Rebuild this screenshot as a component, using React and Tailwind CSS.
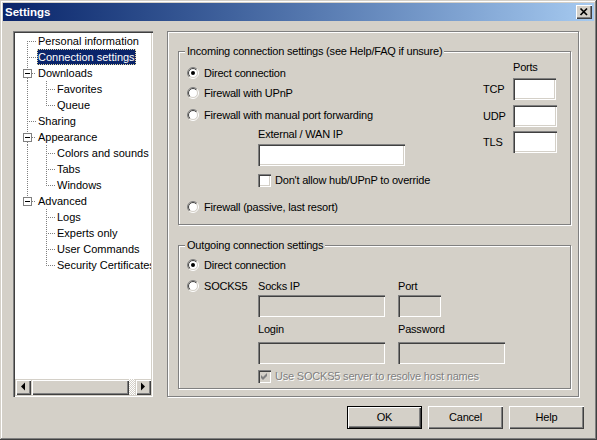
import React, { useId } from "react";

const raised =
  "shadow-[inset_1px_1px_#d4d0c8,inset_2px_2px_#fff,inset_-1px_-1px_#404040,inset_-2px_-2px_#808080]";
const button =
  "shadow-[inset_1px_1px_#fff,inset_-1px_-1px_#404040,inset_-2px_-2px_#808080]";
const sunken =
  "shadow-[inset_1px_1px_#808080,inset_2px_2px_#404040,inset_-1px_-1px_#fff,inset_-2px_-2px_#d4d0c8]";
const etched = "border border-[#808080] shadow-[inset_1px_1px_#fff,1px_1px_#fff]";

const tree = [
  { t: "Personal information", l: 0, first: true },
  { t: "Connection settings", l: 0, sel: true },
  { t: "Downloads", l: 0, box: true },
  { t: "Favorites", l: 1 },
  { t: "Queue", l: 1, last: true },
  { t: "Sharing", l: 0 },
  { t: "Appearance", l: 0, box: true },
  { t: "Colors and sounds", l: 1 },
  { t: "Tabs", l: 1 },
  { t: "Windows", l: 1, last: true },
  { t: "Advanced", l: 0, box: true, lastRoot: true },
  { t: "Logs", l: 1, underLast: true },
  { t: "Experts only", l: 1, underLast: true },
  { t: "User Commands", l: 1, underLast: true },
  { t: "Security Certificates", l: 1, underLast: true, last: true },
];

const dot = { stroke: "#808080", strokeWidth: 1, strokeDasharray: "1 1" };

function TreeLines({ row }) {
  const w = 22 + 19 * row.l;
  const segs = [];
  if (row.l === 0) {
    const top = row.first ? 8 : 0;
    const bottom = row.lastRoot ? 8 : 16;
    if (row.box) {
      if (!row.first) segs.push([12.5, 0, 12.5, 4]);
      if (!row.lastRoot) segs.push([12.5, 13, 12.5, 16]);
      segs.push([17, 8.5, 21, 8.5]);
    } else {
      segs.push([12.5, top, 12.5, bottom]);
      segs.push([12, 8.5, 21, 8.5]);
    }
  } else {
    if (!row.underLast) segs.push([12.5, 0, 12.5, 16]);
    segs.push([31.5, 0, 31.5, row.last ? 9 : 16]);
    segs.push([31, 8.5, 40, 8.5]);
  }
  return (
    <svg width={w} height="16" className="shrink-0">
      {segs.map((s, i) => (
        <line key={i} x1={s[0]} y1={s[1]} x2={s[2]} y2={s[3]} {...dot} />
      ))}
      {row.box && (
        <g>
          <rect x="8.5" y="4.5" width="8" height="8" fill="#fff" stroke="#808080" />
          <line x1="10" y1="8.5" x2="15" y2="8.5" stroke="#000" />
        </g>
      )}
    </svg>
  );
}

function Radio({ checked }) {
  const id = useId().replace(/[^a-zA-Z0-9]/g, "");
  return (
    <svg width="12" height="12" viewBox="0 0 12 12" className="shrink-0">
      <defs>
        <linearGradient id={`o${id}`} x1="0" y1="0" x2="1" y2="1">
          <stop offset="0.5" stopColor="#808080" />
          <stop offset="0.5" stopColor="#ffffff" />
        </linearGradient>
        <linearGradient id={`i${id}`} x1="0" y1="0" x2="1" y2="1">
          <stop offset="0.5" stopColor="#404040" />
          <stop offset="0.5" stopColor="#d4d0c8" />
        </linearGradient>
      </defs>
      <circle cx="6" cy="6" r="5.5" fill="none" stroke={`url(#o${id})`} />
      <circle cx="6" cy="6" r="4.5" fill="#fff" stroke={`url(#i${id})`} />
      {checked && <circle cx="6" cy="6" r="2" fill="#000" />}
    </svg>
  );
}

function RadioRow({ checked, label, className = "" }) {
  return (
    <div className={`flex h-[16px] items-center ${className}`}>
      <Radio checked={checked} />
      <span className="ml-[5px]">{label}</span>
    </div>
  );
}

function Check({ checked, disabled }) {
  return (
    <div
      className={`h-[13px] w-[13px] shrink-0 ${sunken} ${
        disabled ? "bg-[#d4d0c8]" : "bg-white"
      }`}
    >
      {checked && (
        <svg width="13" height="13" viewBox="0 0 13 13">
          <path d="M3 5 L5 7 L9 3 L9 6 L5 10 L3 8 Z" fill={disabled ? "#808080" : "#000"} />
        </svg>
      )}
    </div>
  );
}

function Edit({ className = "", disabled }) {
  return (
    <div
      className={`h-[22px] shrink-0 ${sunken} ${
        disabled ? "bg-[#d4d0c8]" : "bg-white"
      } ${className}`}
    />
  );
}

function Group({ title, className = "", children }) {
  return (
    <div className={`${etched} ${className}`}>
      <div className="-mt-[7px] ml-[6px] w-fit bg-[#d4d0c8] px-[2px] leading-[13px]">
        {title}
      </div>
      {children}
    </div>
  );
}

function Arrow({ dir }) {
  return (
    <div className={`flex h-[16px] w-[16px] items-center justify-center bg-[#d4d0c8] ${raised}`}>
      <svg width="16" height="16" viewBox="0 0 16 16">
        {dir === "left" ? (
          <polygon points="6,7.5 10,3.5 10,11.5" fill="#000" />
        ) : (
          <polygon points="6,3.5 10,7.5 6,11.5" fill="#000" />
        )}
      </svg>
    </div>
  );
}

export default function App() {
  return (
    <div className="flex h-[440px] w-[597px] flex-col bg-[#d4d0c8] p-[3px] font-['Liberation_Sans',Arial,sans-serif] text-[11px] leading-[13px] tracking-[-0.2px] text-black shadow-[inset_-1px_-1px_#404040,inset_1px_1px_#d4d0c8,inset_-2px_-2px_#808080,inset_2px_2px_#fff]">
      {/* title bar */}
      <div className="flex h-[18px] shrink-0 items-center justify-between bg-gradient-to-r from-[#0a246a] to-[#a6caf0] pl-[2px] pr-[2px]">
        <span className="text-[11.5px] font-bold tracking-normal text-white">Settings</span>
        <div className={`flex h-[14px] w-[16px] items-center justify-center bg-[#d4d0c8] ${button}`}>
          <svg width="16" height="14" viewBox="0 0 16 14">
            <path d="M4.5 3.5 L11 10 M11 3.5 L4.5 10" stroke="#000" strokeWidth="1.7" />
          </svg>
        </div>
      </div>

      <div className="flex flex-col px-[10px] pt-[10px]">
        <div className="flex h-[366px] gap-[14px]">
          {/* tree */}
          <div className={`flex w-[140px] flex-col bg-white p-[2px] ${sunken}`}>
            <div className="flex-1 overflow-hidden">
              {tree.map((row) => (
                <div key={row.t} className="flex h-[16px] items-center whitespace-nowrap">
                  <TreeLines row={row} />
                  <span
                    className={`h-[16px] border leading-[14px] tracking-normal ${
                      row.sel
                        ? "border-dotted border-[#e6dca0] bg-[#0a246a] text-white"
                        : "border-transparent"
                    }`}
                  >
                    {row.t}
                  </span>
                </div>
              ))}
            </div>
            <div className="flex h-[16px] shrink-0">
              <Arrow dir="left" />
              <div className={`w-[98px] bg-[#d4d0c8] ${raised}`} />
              <div className="w-[6px] bg-[repeating-conic-gradient(#d4d0c8_0_25%,#fff_0_50%)] bg-[length:2px_2px]" />
              <Arrow dir="right" />
            </div>
          </div>

          {/* page */}
          <div className={`w-[412px] pl-[10px] pt-[19px] ${etched}`}>
            <Group
              title="Incoming connection settings (see Help/FAQ if unsure)"
              className="h-[174px] w-[393px]"
            >
              <div className="flex justify-between">
                <div className="flex flex-col pl-[8px]">
                  <RadioRow checked label="Direct connection" className="mt-[7px]" />
                  <RadioRow label="Firewall with UPnP" className="mt-[4px]" />
                  <RadioRow label="Firewall with manual port forwarding" className="mt-[6px]" />
                  <div className="ml-[71px] mt-[5px]">External / WAN IP</div>
                  <Edit className="ml-[71px] mt-[3px] w-[147px]" />
                  <div className="ml-[71px] mt-[8px] flex h-[13px] items-center">
                    <Check />
                    <span className="ml-[4px]">Don't allow hub/UPnP to override</span>
                  </div>
                  <RadioRow label="Firewall (passive, last resort)" className="mt-[12px]" />
                </div>
                <div className="mr-[13px] flex flex-col">
                  <div className="ml-[30px] mt-[3px]">Ports</div>
                  {[
                    ["TCP", "mt-[4px]", "w-[43px]"],
                    ["UDP", "mt-[5px]", "w-[44px]"],
                    ["TLS", "mt-[4px]", "w-[44px]"],
                  ].map(([p, m, w]) => (
                    <div key={p} className={`flex h-[22px] items-center ${m}`}>
                      <span className="w-[30px]">{p}</span>
                      <Edit className={w} />
                    </div>
                  ))}
                </div>
              </div>
            </Group>

            <Group title="Outgoing connection settings" className="mt-[20px] h-[144px] w-[393px]">
              <div className="flex flex-col pl-[8px]">
                <RadioRow checked label="Direct connection" className="mt-[5px]" />
                <div className="mt-[5px] flex">
                  <RadioRow label="SOCKS5" className="w-[71px]" />
                  <div className="flex flex-col">
                    <div className="flex h-[16px] items-center">
                      <span className="w-[140px]">Socks IP</span>
                      <span>Port</span>
                    </div>
                    <div className="mt-[1px] flex">
                      <Edit disabled className="w-[127px]" />
                      <Edit disabled className="ml-[13px] w-[43px]" />
                    </div>
                    <div className="mt-[4px] flex h-[16px] items-center">
                      <span className="w-[140px]">Login</span>
                      <span>Password</span>
                    </div>
                    <div className="mt-[5px] flex">
                      <Edit disabled className="w-[127px]" />
                      <Edit disabled className="ml-[13px] w-[107px]" />
                    </div>
                    <div className="mt-[6px] flex h-[13px] items-center">
                      <Check checked disabled />
                      <span className="ml-[4px] text-[#808080] [text-shadow:1px_1px_0_#fff]">
                        Use SOCKS5 server to resolve host names
                      </span>
                    </div>
                  </div>
                </div>
              </div>
            </Group>
          </div>
        </div>

        <div className="mt-[9px] flex justify-end gap-[6px]">
          <div className={`flex h-[23px] w-[75px] items-center justify-center border border-black ${button}`}>
            OK
          </div>
          <div className={`flex h-[23px] w-[75px] items-center justify-center ${button}`}>
            Cancel
          </div>
          <div className={`flex h-[23px] w-[75px] items-center justify-center ${button}`}>
            Help
          </div>
        </div>
      </div>
    </div>
  );
}
